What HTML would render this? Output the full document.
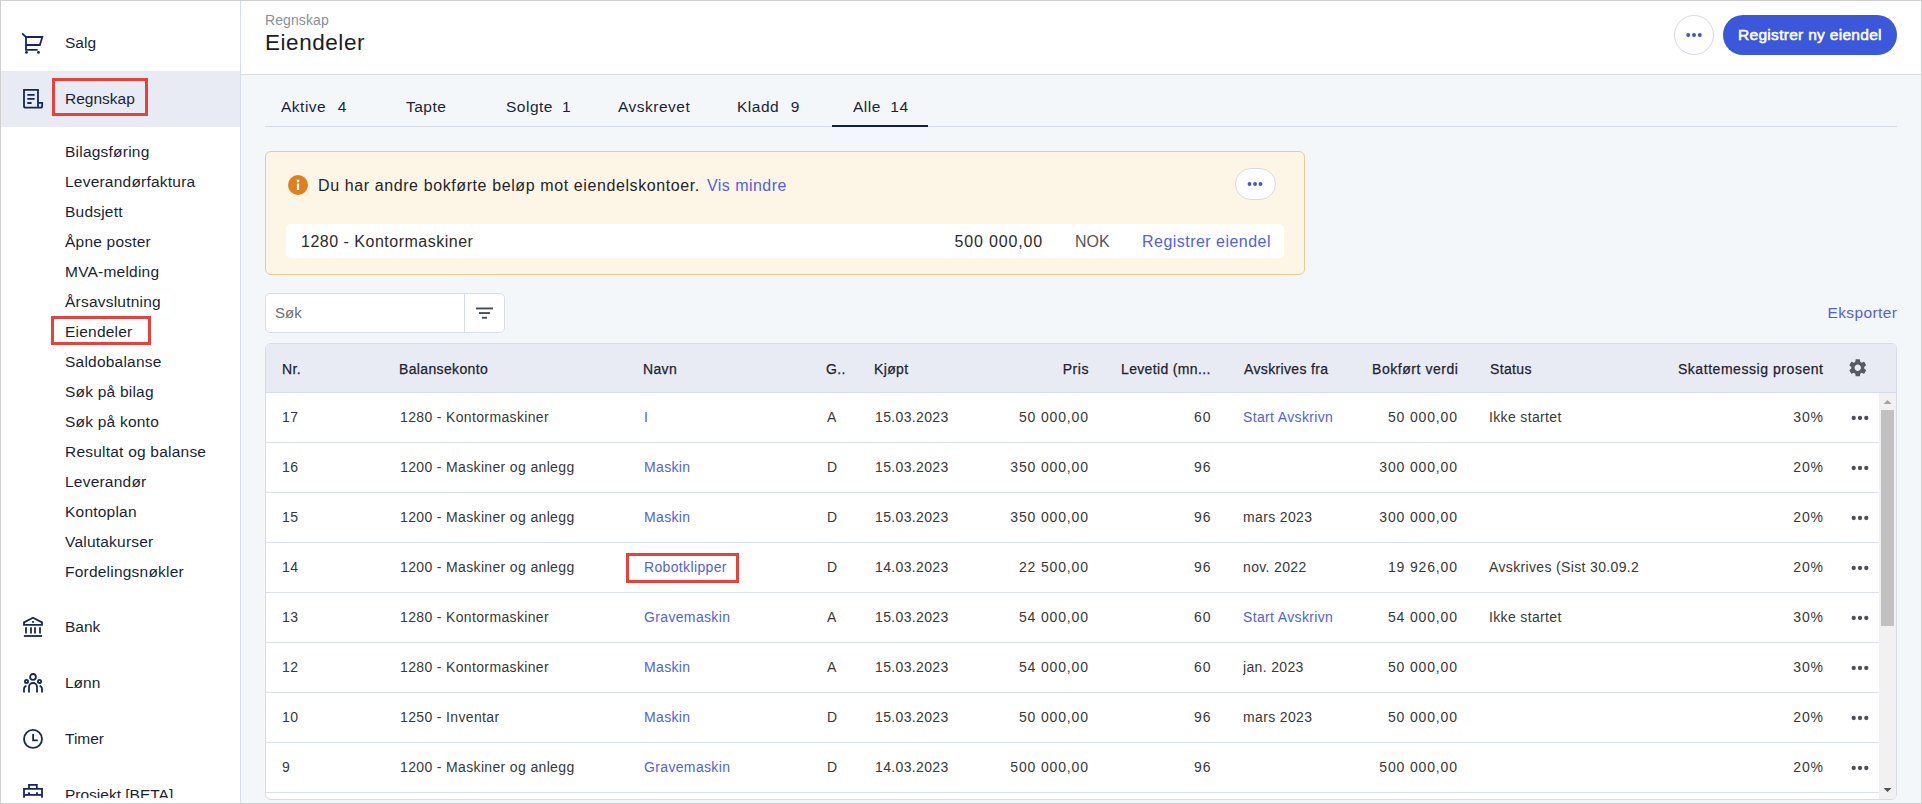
<!DOCTYPE html>
<html><head><meta charset="utf-8">
<style>
*{box-sizing:border-box;margin:0;padding:0}
html,body{width:1922px;height:804px;overflow:hidden;background:#f4f7f9;font-family:"Liberation Sans",sans-serif}
.abs{position:absolute}
#frame{position:absolute;left:0;top:0;width:1922px;height:804px;border:1px solid #d0d0d0;z-index:50}
#side{position:absolute;left:0;top:0;width:241px;height:804px;background:#fff;border-right:1px solid #d8dee7;overflow:hidden}
.nav{position:absolute;left:65px;font-size:15.5px;line-height:20px;color:#1a1f36;white-space:nowrap}
.sub{position:absolute;left:65px;font-size:15.5px;line-height:20px;color:#1a1f36;white-space:nowrap;letter-spacing:0.22px}
.ico{position:absolute;left:20px;width:26px;height:26px}
.redbox{position:absolute;border:3px solid #e8403a}
#hdr{position:absolute;left:241px;top:0;width:1681px;height:75px;background:#fff;border-bottom:1px solid #d8dde5}
.tab{position:absolute;top:97px;font-size:15.5px;line-height:20px;color:#1a1f36;white-space:nowrap;letter-spacing:0.5px}
.tab b{font-weight:normal;margin-left:11.5px}
#alert{position:absolute;left:265px;top:151px;width:1040px;height:124px;background:#fdf6e6;border:1px solid #eccb8c;border-radius:6px}
.t16{font-size:16px;line-height:20px;white-space:nowrap}
#tbl{position:absolute;left:265px;top:343px;width:1632px;height:457px;background:#fff;border:1px solid #d6dbe4;border-radius:6px;overflow:hidden}
#thead{position:absolute;left:0;top:0;width:1630px;height:49px;background:#e8ebf3;border-bottom:1px solid #d7dce6}
.th{position:absolute;top:16px;font-size:14px;line-height:18px;color:#1f2230;white-space:nowrap;-webkit-text-stroke:0.25px #1f2230;letter-spacing:0.35px}
.row{position:absolute;left:0;width:1613px;height:50px;border-bottom:1px solid #dde2ea}
.td{position:absolute;top:15px;font-size:14px;line-height:18px;color:#383838;white-space:nowrap;letter-spacing:0.35px}
.r{text-align:right}
.lk{color:#525fe6}
</style></head>
<body>

<div id="side">
<div class="abs" style="left:1px;top:71px;width:239px;height:56px;background:#e8ebf3"></div>
<svg class="abs" style="left:20px;top:30px" width="26" height="26" viewBox="0 0 26 26" fill="none" stroke="#16285a" stroke-width="1.8">
<path d="M2.6 3.9 L6 7.1" stroke-linecap="round"/>
<path d="M6 6.1 V19.8 H17.6"/>
<path d="M5.1 7 H22.3 L19.9 15 H6"/>
<circle cx="6.5" cy="22.4" r="1.45" fill="#16285a" stroke="none"/>
<circle cx="18.5" cy="22.4" r="1.45" fill="#16285a" stroke="none"/>
</svg>
<div class="nav" style="top:33px">Salg</div>
<svg class="abs" style="left:20px;top:86px" width="26" height="26" viewBox="0 0 26 26" fill="none" stroke="#16285a" stroke-width="1.8">
<path d="M18 16.9 V3.8 H4 V20 Q4 21.7 5.7 21.7 H20.5 Q22.2 21.7 22.2 20 V16.9 H18 V21.7"/>
<path d="M7.3 8.9 H14.6 M7.3 12.9 H14.6 M7.3 17 H11.6" stroke-width="1.9"/>
</svg>
<div class="nav" style="top:89px">Regnskap</div>
<div class="redbox" style="left:52px;top:78px;width:96px;height:38px"></div>
<div class="sub" style="top:142px">Bilagsføring</div>
<div class="sub" style="top:172px">Leverandørfaktura</div>
<div class="sub" style="top:202px">Budsjett</div>
<div class="sub" style="top:232px">Åpne poster</div>
<div class="sub" style="top:262px">MVA-melding</div>
<div class="sub" style="top:292px">Årsavslutning</div>
<div class="sub" style="top:322px">Eiendeler</div>
<div class="sub" style="top:352px">Saldobalanse</div>
<div class="sub" style="top:382px">Søk på bilag</div>
<div class="sub" style="top:412px">Søk på konto</div>
<div class="sub" style="top:442px">Resultat og balanse</div>
<div class="sub" style="top:472px">Leverandør</div>
<div class="sub" style="top:502px">Kontoplan</div>
<div class="sub" style="top:532px">Valutakurser</div>
<div class="sub" style="top:562px">Fordelingsnøkler</div>
<div class="redbox" style="left:51px;top:316px;width:100px;height:29px"></div>
<svg class="abs" style="left:20px;top:613px" width="26" height="26" viewBox="0 0 26 26" fill="none" stroke="#16285a" stroke-width="1.8">
<path d="M4 11.9 V9.4 L13 4.7 L22 9.4 V11.9 Z" stroke-linejoin="miter"/>
<rect x="12.1" y="8" width="1.8" height="1.8" fill="#16285a" stroke="none"/>
<path d="M6 14.3 V20.5 M11 14.3 V20.5 M15 14.3 V20.5 M20 14.3 V20.5"/>
<path d="M3.9 23 H22.1"/>
</svg>
<div class="nav" style="top:617px">Bank</div>
<svg class="abs" style="left:20px;top:669px" width="26" height="26" viewBox="0 0 26 26" fill="none" stroke="#16285a" stroke-width="1.8">
<circle cx="13" cy="7.9" r="2.9"/>
<circle cx="6.5" cy="12.4" r="1.6"/>
<circle cx="19.5" cy="12.4" r="1.6"/>
<path d="M9 23.5 V18 A4 4 0 0 1 17 18 V23.5"/>
<path d="M6.4 16.8 Q4 17.4 4 20 V23.5"/>
<path d="M19.6 16.8 Q22 17.4 22 20 V23.5"/>
</svg>
<div class="nav" style="top:673px">Lønn</div>
<svg class="abs" style="left:20px;top:725px" width="26" height="26" viewBox="0 0 26 26" fill="none" stroke="#16285a" stroke-width="1.8">
<circle cx="13" cy="13.9" r="9"/>
<path d="M13.1 9.1 V15.3 H17.8"/>
</svg>
<div class="nav" style="top:729px">Timer</div>
<svg class="abs" style="left:20px;top:780px" width="26" height="26" viewBox="0 0 26 26" fill="none" stroke="#16285a" stroke-width="1.8">
<path d="M9 8.9 V4.9 H16.8 V8.9"/>
<path d="M4 17.8 V8.9 H22 V17.8"/>
<path d="M4 14.9 H22"/>
<path d="M9 12.2 V14.9 M17 12.2 V14.9"/>
</svg>
<div class="abs" style="left:0;top:770px;width:240px;height:28px;overflow:hidden"><div class="nav" style="top:15px">Prosjekt [BETA]</div></div>
</div>
<div id="hdr">
<div class="abs" style="left:24px;top:12px;font-size:14px;line-height:16px;color:#8b9099;letter-spacing:0.1px">Regnskap</div>
<div class="abs" style="left:24px;top:30px;font-size:22.5px;line-height:26px;color:#1c1c1e;letter-spacing:0.55px">Eiendeler</div>
</div>
<div class="abs" style="left:1674px;top:15px;width:40px;height:40px;border:1px solid #d3d9e6;border-radius:50%;background:#fff"></div>
<svg class="abs" style="left:1682px;top:29px" width="24" height="12" viewBox="0 0 24 12"><circle cx="6.2" cy="6" r="2.0" fill="#3b58db"/><circle cx="12" cy="6" r="2.0" fill="#3b58db"/><circle cx="17.8" cy="6" r="2.0" fill="#3b58db"/></svg>
<div class="abs" style="left:1723px;top:15px;width:174px;height:40px;border-radius:20px;background:#3b58db"></div>
<div class="abs" style="left:1738px;top:25px;color:#fff;font-size:15.5px;line-height:20px;white-space:nowrap;-webkit-text-stroke:0.55px #fff;letter-spacing:0.3px">Registrer ny eiendel</div>
<div class="tab" style="left:281px">Aktive<b>4</b></div>
<div class="tab" style="left:406px">Tapte</div>
<div class="tab" style="left:506px">Solgte<b style="margin-left:9px">1</b></div>
<div class="tab" style="left:618px">Avskrevet</div>
<div class="tab" style="left:737px">Kladd<b>9</b></div>
<div class="tab" style="left:853px">Alle<b style="margin-left:9.5px">14</b></div>
<div class="abs" style="left:265px;top:126px;width:1632px;height:1px;background:#d6dce4"></div>
<div class="abs" style="left:832px;top:125px;width:96px;height:2px;background:#0f1f4b"></div>
<div id="alert">
<svg class="abs" style="left:22px;top:23px" width="20" height="20" viewBox="0 0 20 20"><circle cx="10" cy="10" r="10" fill="#e0801c"/>
<circle cx="10" cy="6" r="1.4" fill="#fff"/><rect x="8.9" y="8.6" width="2.2" height="6.4" fill="#fff"/></svg>
<div class="abs t16" style="left:52px;top:24px;color:#23252b;letter-spacing:0.6px">Du har andre bokførte beløp mot eiendelskontoer.</div>
<div class="abs t16" style="left:441px;top:24px;color:#525fe6;letter-spacing:0.45px">Vis mindre</div>
<div class="abs" style="left:969px;top:16px;width:41px;height:32px;border:1px solid #d6dbe6;border-radius:16px;background:#fff"></div>
</div>
<svg class="abs" style="left:1243px;top:178px" width="24" height="12" viewBox="0 0 24 12"><circle cx="6.5" cy="6" r="1.9" fill="#3b58db"/><circle cx="12" cy="6" r="1.9" fill="#3b58db"/><circle cx="17.5" cy="6" r="1.9" fill="#3b58db"/></svg>
<div class="abs" style="left:286px;top:224px;width:998px;height:34px;background:#fff;border-radius:5px"></div>
<div class="abs t16" style="left:301px;top:232px;color:#2b2b2b;letter-spacing:0.5px">1280 - Kontormaskiner</div>
<div class="abs t16" style="left:843px;width:200px;text-align:right;top:232px;color:#2b2b2b;letter-spacing:0.85px">500 000,00</div>
<div class="abs t16" style="left:1075px;top:232px;color:#555">NOK</div>
<div class="abs t16" style="left:1142px;top:232px;color:#525fe6;letter-spacing:0.47px">Registrer eiendel</div>
<div class="abs" style="left:265px;top:293px;width:240px;height:40px;background:#fff;border:1px solid #d9dee6;border-radius:5px"></div>
<div class="abs" style="left:464px;top:294px;width:1px;height:38px;background:#d9dee6"></div>
<div class="abs t16" style="left:275px;top:303px;font-size:15px;color:#6b6f78">Søk</div>
<svg class="abs" style="left:474px;top:303px" width="20" height="20" viewBox="0 0 20 20" fill="#474c57">
<rect x="2" y="4.5" width="17" height="1.9"/><rect x="5" y="9.1" width="11" height="1.9"/><rect x="8" y="13.8" width="5" height="1.9"/></svg>
<div class="abs t16" style="left:1697px;width:200px;text-align:right;top:303px;font-size:15.5px;color:#525fe6;letter-spacing:0.4px;margin-left:0.4px">Eksporter</div>
<div id="tbl">
<div id="thead">
<div class="th" style="left:16px">Nr.</div>
<div class="th" style="left:133px">Balansekonto</div>
<div class="th" style="left:377px">Navn</div>
<div class="th" style="left:560px">G..</div>
<div class="th" style="left:608px">Kjøpt</div>
<div class="th r" style="left:522.5px;width:300px;letter-spacing:0.55px;margin-left:0.55px">Pris</div>
<div class="th" style="left:855px">Levetid (mn...</div>
<div class="th" style="left:978px">Avskrives fra</div>
<div class="th r" style="left:892px;width:300px;letter-spacing:0.55px;margin-left:0.55px">Bokført verdi</div>
<div class="th" style="left:1224px">Status</div>
<div class="th r" style="left:1257px;width:300px;letter-spacing:0.55px;margin-left:0.55px">Skattemessig prosent</div>
<svg class="abs" style="left:1581px;top:13px" width="21.5" height="21.5" viewBox="0 0 24 24"><path fill="#555a63" d="M19.14 12.94c.04-.3.06-.61.06-.94 0-.32-.02-.64-.07-.94l2.03-1.58a.49.49 0 0 0 .12-.61l-1.92-3.32a.488.488 0 0 0-.59-.22l-2.39.96c-.5-.38-1.03-.7-1.62-.94l-.36-2.54a.484.484 0 0 0-.48-.41h-3.84c-.24 0-.43.17-.47.41l-.36 2.54c-.59.24-1.13.57-1.62.94l-2.39-.96c-.22-.08-.47 0-.59.22L2.74 8.87c-.12.21-.08.47.12.61l2.03 1.58c-.05.3-.09.63-.09.94s.02.64.07.94l-2.03 1.58a.49.49 0 0 0-.12.61l1.92 3.32c.12.22.37.29.59.22l2.39-.96c.5.38 1.03.7 1.62.94l.36 2.54c.05.24.24.41.48.41h3.84c.24 0 .44-.17.47-.41l.36-2.54c.59-.24 1.13-.56 1.62-.94l2.39.96c.22.08.47 0 .59-.22l1.92-3.32c.12-.22.07-.47-.12-.61l-2.01-1.58zM12 15.6c-1.98 0-3.6-1.62-3.6-3.6s1.62-3.6 3.6-3.6 3.6 1.62 3.6 3.6-1.62 3.6-3.6 3.6z"/></svg>
</div>
<div class="row" style="top:49px">
<div class="td " style="left:16px">17</div>
<div class="td " style="left:134px">1280 - Kontormaskiner</div>
<div class="td lk" style="left:378px">I</div>
<div class="td " style="left:561px">A</div>
<div class="td " style="left:609px">15.03.2023</div>
<div class="td r " style="left:522px;width:300px;letter-spacing:0.85px;margin-left:0.85px">50 000,00</div>
<div class="td r " style="left:644.5px;width:300px;letter-spacing:0.85px;margin-left:0.85px">60</div>
<div class="td  lk" style="left:977px;width:93px;overflow:hidden">Start Avskrivn</div>
<div class="td r " style="left:891px;width:300px;letter-spacing:0.85px;margin-left:0.85px">50 000,00</div>
<div class="td " style="left:1223px;width:153px;overflow:hidden">Ikke startet</div>
<div class="td r " style="left:1257px;width:300px;letter-spacing:0.85px;margin-left:0.85px">30%</div>
<svg class="abs" style="left:1581.5px;top:19px" width="24" height="12" viewBox="0 0 24 12"><circle cx="5.7" cy="6" r="2.15" fill="#4d5058"/><circle cx="12" cy="6" r="2.15" fill="#4d5058"/><circle cx="18.3" cy="6" r="2.15" fill="#4d5058"/></svg>
</div>
<div class="row" style="top:99px">
<div class="td " style="left:16px">16</div>
<div class="td " style="left:134px">1200 - Maskiner og anlegg</div>
<div class="td lk" style="left:378px">Maskin</div>
<div class="td " style="left:561px">D</div>
<div class="td " style="left:609px">15.03.2023</div>
<div class="td r " style="left:522px;width:300px;letter-spacing:0.85px;margin-left:0.85px">350 000,00</div>
<div class="td r " style="left:644.5px;width:300px;letter-spacing:0.85px;margin-left:0.85px">96</div>
<div class="td r " style="left:891px;width:300px;letter-spacing:0.85px;margin-left:0.85px">300 000,00</div>
<div class="td r " style="left:1257px;width:300px;letter-spacing:0.85px;margin-left:0.85px">20%</div>
<svg class="abs" style="left:1581.5px;top:19px" width="24" height="12" viewBox="0 0 24 12"><circle cx="5.7" cy="6" r="2.15" fill="#4d5058"/><circle cx="12" cy="6" r="2.15" fill="#4d5058"/><circle cx="18.3" cy="6" r="2.15" fill="#4d5058"/></svg>
</div>
<div class="row" style="top:149px">
<div class="td " style="left:16px">15</div>
<div class="td " style="left:134px">1200 - Maskiner og anlegg</div>
<div class="td lk" style="left:378px">Maskin</div>
<div class="td " style="left:561px">D</div>
<div class="td " style="left:609px">15.03.2023</div>
<div class="td r " style="left:522px;width:300px;letter-spacing:0.85px;margin-left:0.85px">350 000,00</div>
<div class="td r " style="left:644.5px;width:300px;letter-spacing:0.85px;margin-left:0.85px">96</div>
<div class="td " style="left:977px;width:93px;overflow:hidden">mars 2023</div>
<div class="td r " style="left:891px;width:300px;letter-spacing:0.85px;margin-left:0.85px">300 000,00</div>
<div class="td r " style="left:1257px;width:300px;letter-spacing:0.85px;margin-left:0.85px">20%</div>
<svg class="abs" style="left:1581.5px;top:19px" width="24" height="12" viewBox="0 0 24 12"><circle cx="5.7" cy="6" r="2.15" fill="#4d5058"/><circle cx="12" cy="6" r="2.15" fill="#4d5058"/><circle cx="18.3" cy="6" r="2.15" fill="#4d5058"/></svg>
</div>
<div class="row" style="top:199px">
<div class="td " style="left:16px">14</div>
<div class="td " style="left:134px">1200 - Maskiner og anlegg</div>
<div class="td lk" style="left:378px">Robotklipper</div>
<div class="td " style="left:561px">D</div>
<div class="td " style="left:609px">14.03.2023</div>
<div class="td r " style="left:522px;width:300px;letter-spacing:0.85px;margin-left:0.85px">22 500,00</div>
<div class="td r " style="left:644.5px;width:300px;letter-spacing:0.85px;margin-left:0.85px">96</div>
<div class="td " style="left:977px;width:93px;overflow:hidden">nov. 2022</div>
<div class="td r " style="left:891px;width:300px;letter-spacing:0.85px;margin-left:0.85px">19 926,00</div>
<div class="td " style="left:1223px;width:153px;overflow:hidden">Avskrives (Sist 30.09.2</div>
<div class="td r " style="left:1257px;width:300px;letter-spacing:0.85px;margin-left:0.85px">20%</div>
<svg class="abs" style="left:1581.5px;top:19px" width="24" height="12" viewBox="0 0 24 12"><circle cx="5.7" cy="6" r="2.15" fill="#4d5058"/><circle cx="12" cy="6" r="2.15" fill="#4d5058"/><circle cx="18.3" cy="6" r="2.15" fill="#4d5058"/></svg>
</div>
<div class="row" style="top:249px">
<div class="td " style="left:16px">13</div>
<div class="td " style="left:134px">1280 - Kontormaskiner</div>
<div class="td lk" style="left:378px">Gravemaskin</div>
<div class="td " style="left:561px">A</div>
<div class="td " style="left:609px">15.03.2023</div>
<div class="td r " style="left:522px;width:300px;letter-spacing:0.85px;margin-left:0.85px">54 000,00</div>
<div class="td r " style="left:644.5px;width:300px;letter-spacing:0.85px;margin-left:0.85px">60</div>
<div class="td  lk" style="left:977px;width:93px;overflow:hidden">Start Avskrivn</div>
<div class="td r " style="left:891px;width:300px;letter-spacing:0.85px;margin-left:0.85px">54 000,00</div>
<div class="td " style="left:1223px;width:153px;overflow:hidden">Ikke startet</div>
<div class="td r " style="left:1257px;width:300px;letter-spacing:0.85px;margin-left:0.85px">30%</div>
<svg class="abs" style="left:1581.5px;top:19px" width="24" height="12" viewBox="0 0 24 12"><circle cx="5.7" cy="6" r="2.15" fill="#4d5058"/><circle cx="12" cy="6" r="2.15" fill="#4d5058"/><circle cx="18.3" cy="6" r="2.15" fill="#4d5058"/></svg>
</div>
<div class="row" style="top:299px">
<div class="td " style="left:16px">12</div>
<div class="td " style="left:134px">1280 - Kontormaskiner</div>
<div class="td lk" style="left:378px">Maskin</div>
<div class="td " style="left:561px">A</div>
<div class="td " style="left:609px">15.03.2023</div>
<div class="td r " style="left:522px;width:300px;letter-spacing:0.85px;margin-left:0.85px">54 000,00</div>
<div class="td r " style="left:644.5px;width:300px;letter-spacing:0.85px;margin-left:0.85px">60</div>
<div class="td " style="left:977px;width:93px;overflow:hidden">jan. 2023</div>
<div class="td r " style="left:891px;width:300px;letter-spacing:0.85px;margin-left:0.85px">50 000,00</div>
<div class="td r " style="left:1257px;width:300px;letter-spacing:0.85px;margin-left:0.85px">30%</div>
<svg class="abs" style="left:1581.5px;top:19px" width="24" height="12" viewBox="0 0 24 12"><circle cx="5.7" cy="6" r="2.15" fill="#4d5058"/><circle cx="12" cy="6" r="2.15" fill="#4d5058"/><circle cx="18.3" cy="6" r="2.15" fill="#4d5058"/></svg>
</div>
<div class="row" style="top:349px">
<div class="td " style="left:16px">10</div>
<div class="td " style="left:134px">1250 - Inventar</div>
<div class="td lk" style="left:378px">Maskin</div>
<div class="td " style="left:561px">D</div>
<div class="td " style="left:609px">15.03.2023</div>
<div class="td r " style="left:522px;width:300px;letter-spacing:0.85px;margin-left:0.85px">50 000,00</div>
<div class="td r " style="left:644.5px;width:300px;letter-spacing:0.85px;margin-left:0.85px">96</div>
<div class="td " style="left:977px;width:93px;overflow:hidden">mars 2023</div>
<div class="td r " style="left:891px;width:300px;letter-spacing:0.85px;margin-left:0.85px">50 000,00</div>
<div class="td r " style="left:1257px;width:300px;letter-spacing:0.85px;margin-left:0.85px">20%</div>
<svg class="abs" style="left:1581.5px;top:19px" width="24" height="12" viewBox="0 0 24 12"><circle cx="5.7" cy="6" r="2.15" fill="#4d5058"/><circle cx="12" cy="6" r="2.15" fill="#4d5058"/><circle cx="18.3" cy="6" r="2.15" fill="#4d5058"/></svg>
</div>
<div class="row" style="top:399px">
<div class="td " style="left:16px">9</div>
<div class="td " style="left:134px">1200 - Maskiner og anlegg</div>
<div class="td lk" style="left:378px">Gravemaskin</div>
<div class="td " style="left:561px">D</div>
<div class="td " style="left:609px">14.03.2023</div>
<div class="td r " style="left:522px;width:300px;letter-spacing:0.85px;margin-left:0.85px">500 000,00</div>
<div class="td r " style="left:644.5px;width:300px;letter-spacing:0.85px;margin-left:0.85px">96</div>
<div class="td r " style="left:891px;width:300px;letter-spacing:0.85px;margin-left:0.85px">500 000,00</div>
<div class="td r " style="left:1257px;width:300px;letter-spacing:0.85px;margin-left:0.85px">20%</div>
<svg class="abs" style="left:1581.5px;top:19px" width="24" height="12" viewBox="0 0 24 12"><circle cx="5.7" cy="6" r="2.15" fill="#4d5058"/><circle cx="12" cy="6" r="2.15" fill="#4d5058"/><circle cx="18.3" cy="6" r="2.15" fill="#4d5058"/></svg>
</div>
<div class="redbox" style="left:360px;top:209px;width:113px;height:30px"></div>
<div class="abs" style="left:1613px;top:49px;width:17px;height:408px;background:#f1f1f1"></div>
<div class="abs" style="left:1615px;top:66px;width:13px;height:216px;background:#c1c1c1"></div>
<svg class="abs" style="left:1613px;top:52px" width="17" height="12" viewBox="0 0 17 12"><path d="M4.5 8 L8.5 4 L12.5 8 Z" fill="#a3a3a3"/></svg>
<svg class="abs" style="left:1613px;top:440px" width="17" height="12" viewBox="0 0 17 12"><path d="M4.5 4 L8.5 8 L12.5 4 Z" fill="#505050"/></svg>
</div>
<div id="frame"></div>
</body></html>
